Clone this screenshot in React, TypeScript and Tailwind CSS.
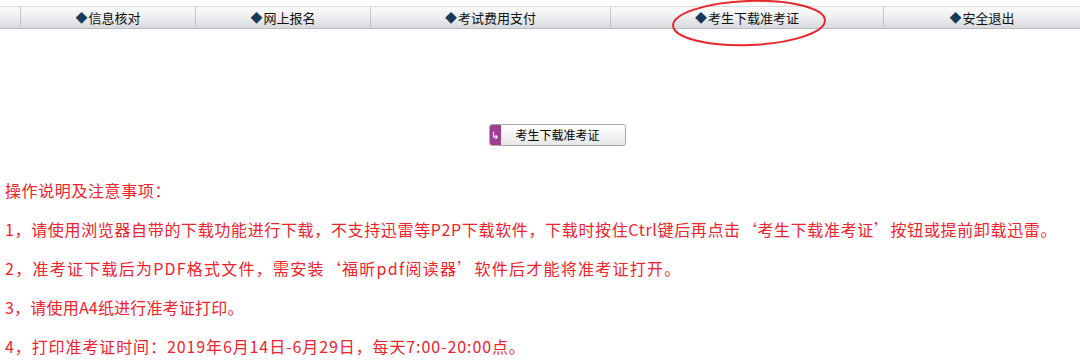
import React from 'react';

const navItems = [
  { label: '信息核对', w: 'w-[175px]' },
  { label: '网上报名', w: 'w-[175px]' },
  { label: '考试费用支付', w: 'w-[240px]' },
  { label: '考生下载准考证', w: 'w-[273px]' },
  { label: '安全退出', w: 'flex-1' },
];

// tracking per line to match the reference's widths
const notes = [
  { text: '1，请使用浏览器自带的下载功能进行下载，不支持迅雷等P2P下载软件，下载时按住Ctrl键后再点击‘考生下载准考证’按钮或提前卸载迅雷。', cls: 'tracking-[0.65px]' },
  { text: '2，准考证下载后为PDF格式文件，需安装‘福昕pdf阅读器’软件后才能将准考证打开。', cls: 'tracking-[1.25px]' },
  { text: '3，请使用A4纸进行准考证打印。', cls: 'tracking-[0.2px]' },
  { text: '4，打印准考证时间：2019年6月14日-6月29日，每天7:00-20:00点。', cls: 'tracking-[0.9px]' },
];

export default function App() {
  return (
    <div className="relative w-[1080px] h-[360px] bg-white overflow-hidden font-['Noto_Sans_CJK_SC',sans-serif]">
      {/* top menu */}
      <div className="pt-[6px]">
        <div className="flex h-[23px] border-t border-[#dcdcdc] border-b border-b-[#b9bcc0] bg-gradient-to-b from-[#fbfbfb] via-[#eceef0] to-[#d7dadd]">
          <div className="w-[20px]" />
          {navItems.map((item) => (
            <div
              key={item.label}
              className={`${item.w} flex items-center justify-center border-l border-[#c4c6c9] text-[13px] leading-none text-[#111]`}
            >
              <span className="text-[#17395a] text-[12px] mr-[1px]">◆</span>
              {item.label}
            </div>
          ))}
        </div>
      </div>

      {/* red highlight ellipse */}
      <svg className="absolute left-[670px] top-0" width="160" height="50" viewBox="0 0 160 50">
        <ellipse cx="79" cy="23" rx="76" ry="22" fill="none" stroke="#e8262c" strokeWidth="2" transform="rotate(-2 79 23)" />
      </svg>

      {/* download button */}
      <div className="flex justify-center pl-[34px] mt-[95px]">
        <div className="flex w-[137px] h-[22px] rounded-[3px] border border-[#a9a9a9] bg-gradient-to-b from-white to-[#e6e6e6] overflow-hidden">
          <div className="w-[11px] h-full bg-[#9a3f92] flex items-center justify-center text-white text-[10px] leading-none">↳</div>
          <div className="flex-1 flex items-center justify-center text-[12px] leading-none text-black pr-[10px]">考生下载准考证</div>
        </div>
      </div>

      {/* notes */}
      <div className="pl-[5px] mt-[25px] text-[#f2222c] text-[16px] leading-[39px]">
        <div className="tracking-[0.6px]">操作说明及注意事项：</div>
        {notes.map((n) => (
          <div key={n.text} className={`whitespace-nowrap ${n.cls}`}>{n.text}</div>
        ))}
      </div>
    </div>
  );
}
